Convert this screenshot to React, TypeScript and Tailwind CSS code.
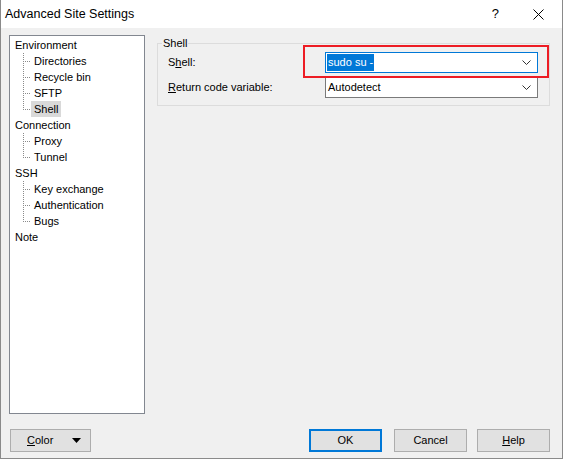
import React from "react";

const font = { fontFamily: '"Liberation Sans", Arial, sans-serif' };

function Child({ label, last, selected }: { label: string; last?: boolean; selected?: boolean }) {
  return (
    <div className="flex h-[16px] items-center">
      <svg width="21" height="16" className="shrink-0" shapeRendering="crispEdges">
        <line x1="13.5" y1="0" x2="13.5" y2={last ? 9 : 16} stroke="#8a8a8a" strokeDasharray="1 1" />
        <line x1="15" y1="8.5" x2="21" y2="8.5" stroke="#8a8a8a" strokeDasharray="1 1" />
      </svg>
      <span className={"h-[16px] px-[3px] leading-[16px] " + (selected ? "bg-[#d9d9d9]" : "")}>{label}</span>
    </div>
  );
}

function Root({ label }: { label: string }) {
  return <div className="h-[16px] pl-[5px] leading-[16px]">{label}</div>;
}

function Chevron() {
  return (
    <svg width="9" height="5" viewBox="0 0 9 5" className="shrink-0">
      <polyline points="0.5,0.5 4.5,4.5 8.5,0.5" fill="none" stroke="#333" strokeWidth="1" />
    </svg>
  );
}

export default function App() {
  return (
    <div className="relative flex h-[459px] w-[563px] flex-col border-x border-b border-[#8a8a8a] text-[11px] text-black" style={font}>
      {/* title bar */}
      <div className="flex h-[28px] shrink-0 items-center bg-white">
        <span className="ml-[4px] text-[12.5px]">Advanced Site Settings</span>
        <span className="ml-auto mr-[34px] text-[13px]">?</span>
        <svg width="11" height="11" viewBox="0 0 11 11" className="mr-[18px]">
          <path d="M0.5 0.5 L10.5 10.5 M10.5 0.5 L0.5 10.5" stroke="#000" strokeWidth="1" />
        </svg>
      </div>

      <div className="flex flex-1 flex-col bg-[#f0f0f0]">
        <div className="flex pl-[8px] pt-[7px]">
          {/* tree */}
          <div className="h-[379px] w-[136px] border border-[#828790] bg-white pt-[1px]">
            <Root label="Environment" />
            <Child label="Directories" />
            <Child label="Recycle bin" />
            <Child label="SFTP" />
            <Child label="Shell" last selected />
            <Root label="Connection" />
            <Child label="Proxy" />
            <Child label="Tunnel" last />
            <Root label="SSH" />
            <Child label="Key exchange" />
            <Child label="Authentication" />
            <Child label="Bugs" last />
            <Root label="Note" />
          </div>

          {/* group box */}
          <fieldset className="ml-[12px] mt-[2px] h-[69px] w-[393px] border border-[#dcdcdc] px-[10px] pb-[7px]">
            <legend className="-ml-[6px] px-[1px] leading-[13px]">Shell</legend>
            <div className="mt-[2px] flex h-[21px] items-center">
              <span className="w-[157px]">
                S<span className="underline">h</span>ell:
              </span>
              <div className="flex h-[21px] w-[213px] items-center border border-[#0078d7] bg-white pl-[1px] pr-[6px]">
                <span className="bg-[#0078d7] px-[1px] leading-[17px] text-white">sudo su -</span>
                <span className="ml-auto" />
                <Chevron />
              </div>
            </div>
            <div className="mt-[4px] flex h-[21px] items-center">
              <span className="w-[157px]">
                <span className="underline">R</span>eturn code variable:
              </span>
              <div className="flex h-[21px] w-[213px] items-center border border-[#7a7a7a] bg-white pl-[2px] pr-[6px]">
                <span>Autodetect</span>
                <span className="ml-auto" />
                <Chevron />
              </div>
            </div>
          </fieldset>
        </div>

        {/* buttons */}
        <div className="mt-[15px] flex">
          <div className="ml-[9px] flex h-[23px] w-[81px] items-center border border-[#adadad] bg-[#e1e1e1]">
            <span className="ml-[16px]">
              <span className="underline">C</span>olor
            </span>
            <svg width="9" height="5" viewBox="0 0 9 5" className="ml-auto mr-[9px]">
              <polygon points="0,0 9,0 4.5,5" fill="#000" />
            </svg>
          </div>
          <div className="ml-auto flex h-[23px] w-[73px] items-center justify-center border-2 border-[#0078d7] bg-[#e1e1e1]">OK</div>
          <div className="ml-[12px] flex h-[23px] w-[73px] items-center justify-center border border-[#adadad] bg-[#e1e1e1]">Cancel</div>
          <div className="ml-[10px] mr-[12px] flex h-[23px] w-[73px] items-center justify-center border border-[#adadad] bg-[#e1e1e1]">
            <span>
              <span className="underline">H</span>elp
            </span>
          </div>
        </div>
      </div>

      {/* red highlight */}
      <div className="pointer-events-none absolute left-[302px] top-[45px] h-[33px] w-[246px] border-2 border-[#ed1c24]" />
    </div>
  );
}
